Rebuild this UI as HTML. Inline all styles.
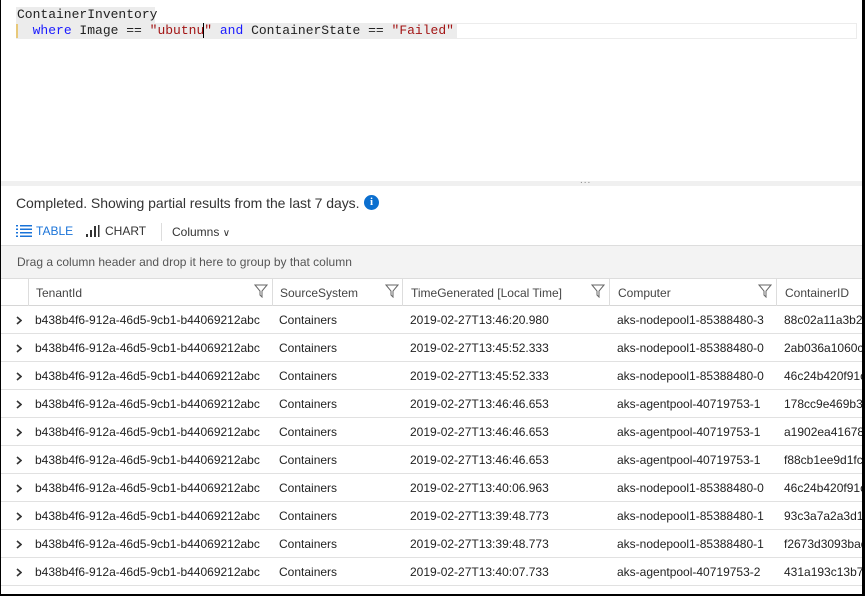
<!DOCTYPE html>
<html><head><style>
*{margin:0;padding:0;box-sizing:border-box}
body{width:865px;height:596px;overflow:hidden;background:#fff;font-family:"Liberation Sans",sans-serif;position:relative}
.frame{position:absolute;left:0;top:0;width:865px;height:596px;border-left:1px solid #000;border-right:3px solid #000;border-bottom:2px solid #000;pointer-events:none;z-index:5}
.code{position:absolute;font-family:"Liberation Mono",monospace;font-size:13px;white-space:pre;line-height:16px}
.kw{color:#1a1aff}.str{color:#a31515}
.split{position:absolute;left:0;top:181px;width:865px;height:5px;background:#f0f0f0}
.t{position:absolute;white-space:nowrap;font-size:12px;color:#333}
.row{position:absolute;left:1px;width:862px;height:28px;border-bottom:1px solid #e1e1e1}
.row span{position:absolute;top:7px;font-size:12px;color:#222;white-space:nowrap}
.row svg{position:absolute;left:15px;top:10px}
.vl{position:absolute;top:279px;width:1px;height:27px;background:#ddd}
.fil{position:absolute;top:284px}
</style></head><body>
<div style="position:absolute;left:16px;top:7px;width:139px;height:16px;background:#ececec"></div>
<div style="position:absolute;left:16px;top:23px;width:841px;height:16px;border:1px solid #ececec"></div>
<div style="position:absolute;left:16px;top:23px;width:441px;height:16px;background:#ececec"></div>
<div style="position:absolute;left:16px;top:24px;width:2px;height:14px;background:#e8c97a"></div>
<div class="code" style="left:17px;top:7px;color:#222">ContainerInventory</div>
<div class="code" style="left:17px;top:23px;color:#222">  <span class="kw">where</span> Image == <span class="str">"ubutnu</span><span style="border-left:1px solid #000;margin-left:-1px"></span><span class="str">"</span> <span class="kw">and</span> ContainerState == <span class="str">"Failed"</span></div>
<div class="split"></div>
<div class="t" style="left:580px;top:175px;color:#888;font-size:10px;letter-spacing:1px">...</div>
<div class="t" style="left:16px;top:195px;font-size:14px;color:#333;letter-spacing:-0.05px">Completed. Showing partial results from the last 7 days.</div>
<div style="position:absolute;left:364px;top:195px;width:15px;height:15px;border-radius:50%;background:#0b6fcf;color:#fff;font-size:11px;font-weight:bold;text-align:center;line-height:15px;font-family:'Liberation Serif',serif">i</div>
<svg style="position:absolute;left:16px;top:225px" width="16" height="12"><g fill="#1a73d8"><rect x="0" y="0" width="2" height="1.5"/><rect x="4" y="0" width="12" height="1.5"/><rect x="0" y="3.5" width="2" height="1.5"/><rect x="4" y="3.5" width="12" height="1.5"/><rect x="0" y="7" width="2" height="1.5"/><rect x="4" y="7" width="12" height="1.5"/><rect x="0" y="10.5" width="2" height="1.5"/><rect x="4" y="10.5" width="12" height="1.5"/></g></svg>
<div class="t" style="left:36px;top:224px;color:#1a73d8">TABLE</div>
<svg style="position:absolute;left:86px;top:225px" width="14" height="12"><g fill="#333"><rect x="0" y="9" width="2" height="3"/><rect x="4" y="5" width="2" height="7"/><rect x="8" y="1" width="2" height="11"/><rect x="12" y="0" width="1.5" height="12"/></g></svg>
<div class="t" style="left:105px;top:224px">CHART</div>
<div style="position:absolute;left:161px;top:223px;width:1px;height:18px;background:#ddd"></div>
<div class="t" style="left:172px;top:225px">Columns <span style="font-size:10px">&#x2228;</span></div>
<div style="position:absolute;left:1px;top:245px;width:862px;height:34px;background:#f3f3f3;border-top:1px solid #ddd;border-bottom:1px solid #ddd"></div>
<div class="t" style="left:17px;top:255px;color:#555">Drag a column header and drop it here to group by that column</div>
<div style="position:absolute;left:1px;top:305px;width:862px;height:1px;background:#d6d6d6"></div>
<div class="vl" style="left:28px"></div><div class="vl" style="left:272px"></div><div class="vl" style="left:402px"></div><div class="vl" style="left:609px"></div><div class="vl" style="left:776px"></div>
<div class="t" style="left:36px;top:286px;color:#444">TenantId</div>
<div class="t" style="left:280px;top:286px;color:#444">SourceSystem</div>
<div class="t" style="left:411px;top:286px;color:#444">TimeGenerated [Local Time]</div>
<div class="t" style="left:618px;top:286px;color:#444">Computer</div>
<div class="t" style="left:785px;top:286px;color:#444">ContainerID</div>
<svg class="fil" style="left:254px" width="14" height="14"><path d="M1 1H13L8 7V13L6 11V7Z" fill="none" stroke="#666"/></svg>
<svg class="fil" style="left:385px" width="14" height="14"><path d="M1 1H13L8 7V13L6 11V7Z" fill="none" stroke="#666"/></svg>
<svg class="fil" style="left:591px" width="14" height="14"><path d="M1 1H13L8 7V13L6 11V7Z" fill="none" stroke="#666"/></svg>
<svg class="fil" style="left:758px" width="14" height="14"><path d="M1 1H13L8 7V13L6 11V7Z" fill="none" stroke="#666"/></svg>
<div id="rows"></div>
<script>
var d=[["2019-02-27T13:46:20.980","aks-nodepool1-85388480-3","88c02a11a3b22"],["2019-02-27T13:45:52.333","aks-nodepool1-85388480-0","2ab036a1060c0"],["2019-02-27T13:45:52.333","aks-nodepool1-85388480-0","46c24b420f91c"],["2019-02-27T13:46:46.653","aks-agentpool-40719753-1","178cc9e469b3e"],["2019-02-27T13:46:46.653","aks-agentpool-40719753-1","a1902ea416787"],["2019-02-27T13:46:46.653","aks-agentpool-40719753-1","f88cb1ee9d1fc"],["2019-02-27T13:40:06.963","aks-nodepool1-85388480-0","46c24b420f91c"],["2019-02-27T13:39:48.773","aks-nodepool1-85388480-1","93c3a7a2a3d14"],["2019-02-27T13:39:48.773","aks-nodepool1-85388480-1","f2673d3093bad"],["2019-02-27T13:40:07.733","aks-agentpool-40719753-2","431a193c13b78"]];
var h="";d.forEach(function(r,i){h+='<div class="row" style="top:'+(306+i*28)+'px"><svg width="6" height="9"><path d="M1 1L5 4.5L1 8" fill="none" stroke="#333" stroke-width="1.6"/></svg><span style="left:34px">b438b4f6-912a-46d5-9cb1-b44069212abc</span><span style="left:278px">Containers</span><span style="left:409px">'+r[0]+'</span><span style="left:616px">'+r[1]+'</span><span style="left:783px">'+r[2]+'</span></div>'});
document.getElementById("rows").innerHTML=h;
</script>
<div class="frame"></div>
</body></html>
